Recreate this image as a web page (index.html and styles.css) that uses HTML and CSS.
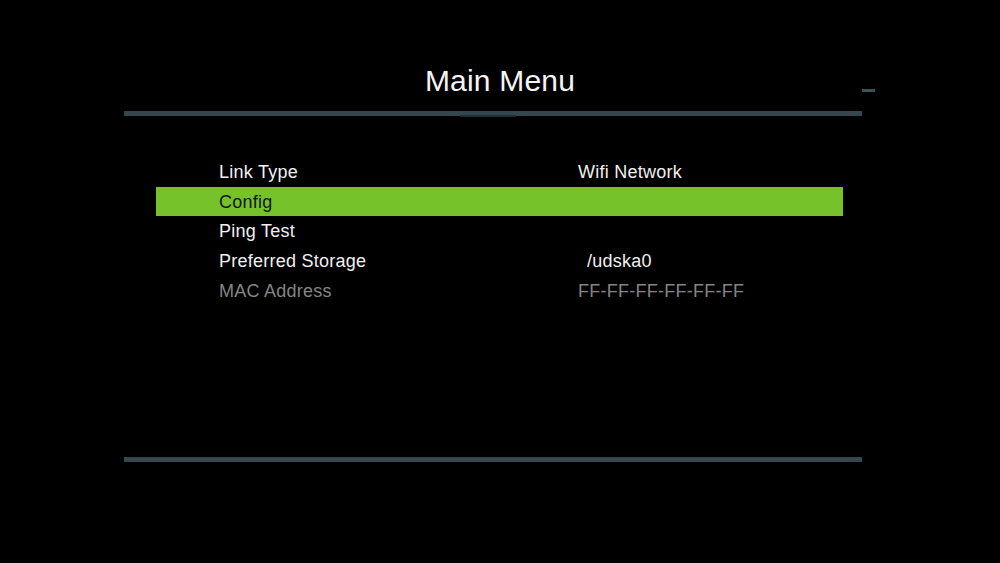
FILE: index.html
```html
<!DOCTYPE html>
<html>
<head>
<meta charset="utf-8">
<link rel="stylesheet" href="styles.css">
</head>
<body>
<div class="screen">
  <h1 class="title">Main Menu</h1>
  <div class="dash"></div>
  <div class="rule rule-top"><div class="thumb"></div></div>
  <div class="content">
    <div class="row"><span class="label">Link Type</span><span class="value">Wifi Network</span></div>
    <div class="row selected"><span class="label">Config</span><span class="value"></span></div>
    <div class="row"><span class="label">Ping Test</span><span class="value"></span></div>
    <div class="row"><span class="label">Preferred Storage</span><span class="value indent">/udska0</span></div>
    <div class="row disabled"><span class="label">MAC Address</span><span class="value">FF-FF-FF-FF-FF-FF</span></div>
  </div>
  <div class="rule"></div>
</div>
</body>
</html>
```
FILE: styles.css
```css
html, body {
  margin: 0;
  padding: 0;
  background: #000;
}
.screen {
  position: relative;
  width: 1000px;
  height: 563px;
  background: #000;
  font-family: "Liberation Sans", Arial, sans-serif;
  color: #f0f0f0;
  display: flex;
  flex-direction: column;
  overflow: hidden;
}
.title {
  margin: 63px 0 0 0;
  height: 36px;
  line-height: 36px;
  font-size: 30px;
  font-weight: normal;
  letter-spacing: 0.2px;
  text-align: center;
  color: #f5f5f5;
}
.dash {
  position: absolute;
  left: 862px;
  top: 89px;
  width: 13px;
  height: 3px;
  background: #3c5058;
}
.rule {
  margin: 0 138px 0 124px;
  height: 5px;
  background: #34474f;
  position: relative;
}
.rule-top {
  margin-top: 12px;
}
.thumb {
  position: absolute;
  left: 336px;
  top: 4px;
  width: 56px;
  height: 2px;
  background: #1f2e36;
}
.content {
  height: 341px;
  box-sizing: border-box;
  padding-top: 41px;
  display: flex;
  flex-direction: column;
  margin: 0 157px 0 156px;
}
.row {
  height: 29.6px;
  display: grid;
  grid-template-columns: 359px 1fr;
  align-items: center;
  padding-left: 63px;
  padding-top: 2px;
  box-sizing: border-box;
  font-size: 18px;
  letter-spacing: 0.25px;
}
.row.selected {
  background: #76c22a;
  color: #141414;
}
.row.disabled {
  color: #858585;
}
.indent {
  padding-left: 9px;
}
```
